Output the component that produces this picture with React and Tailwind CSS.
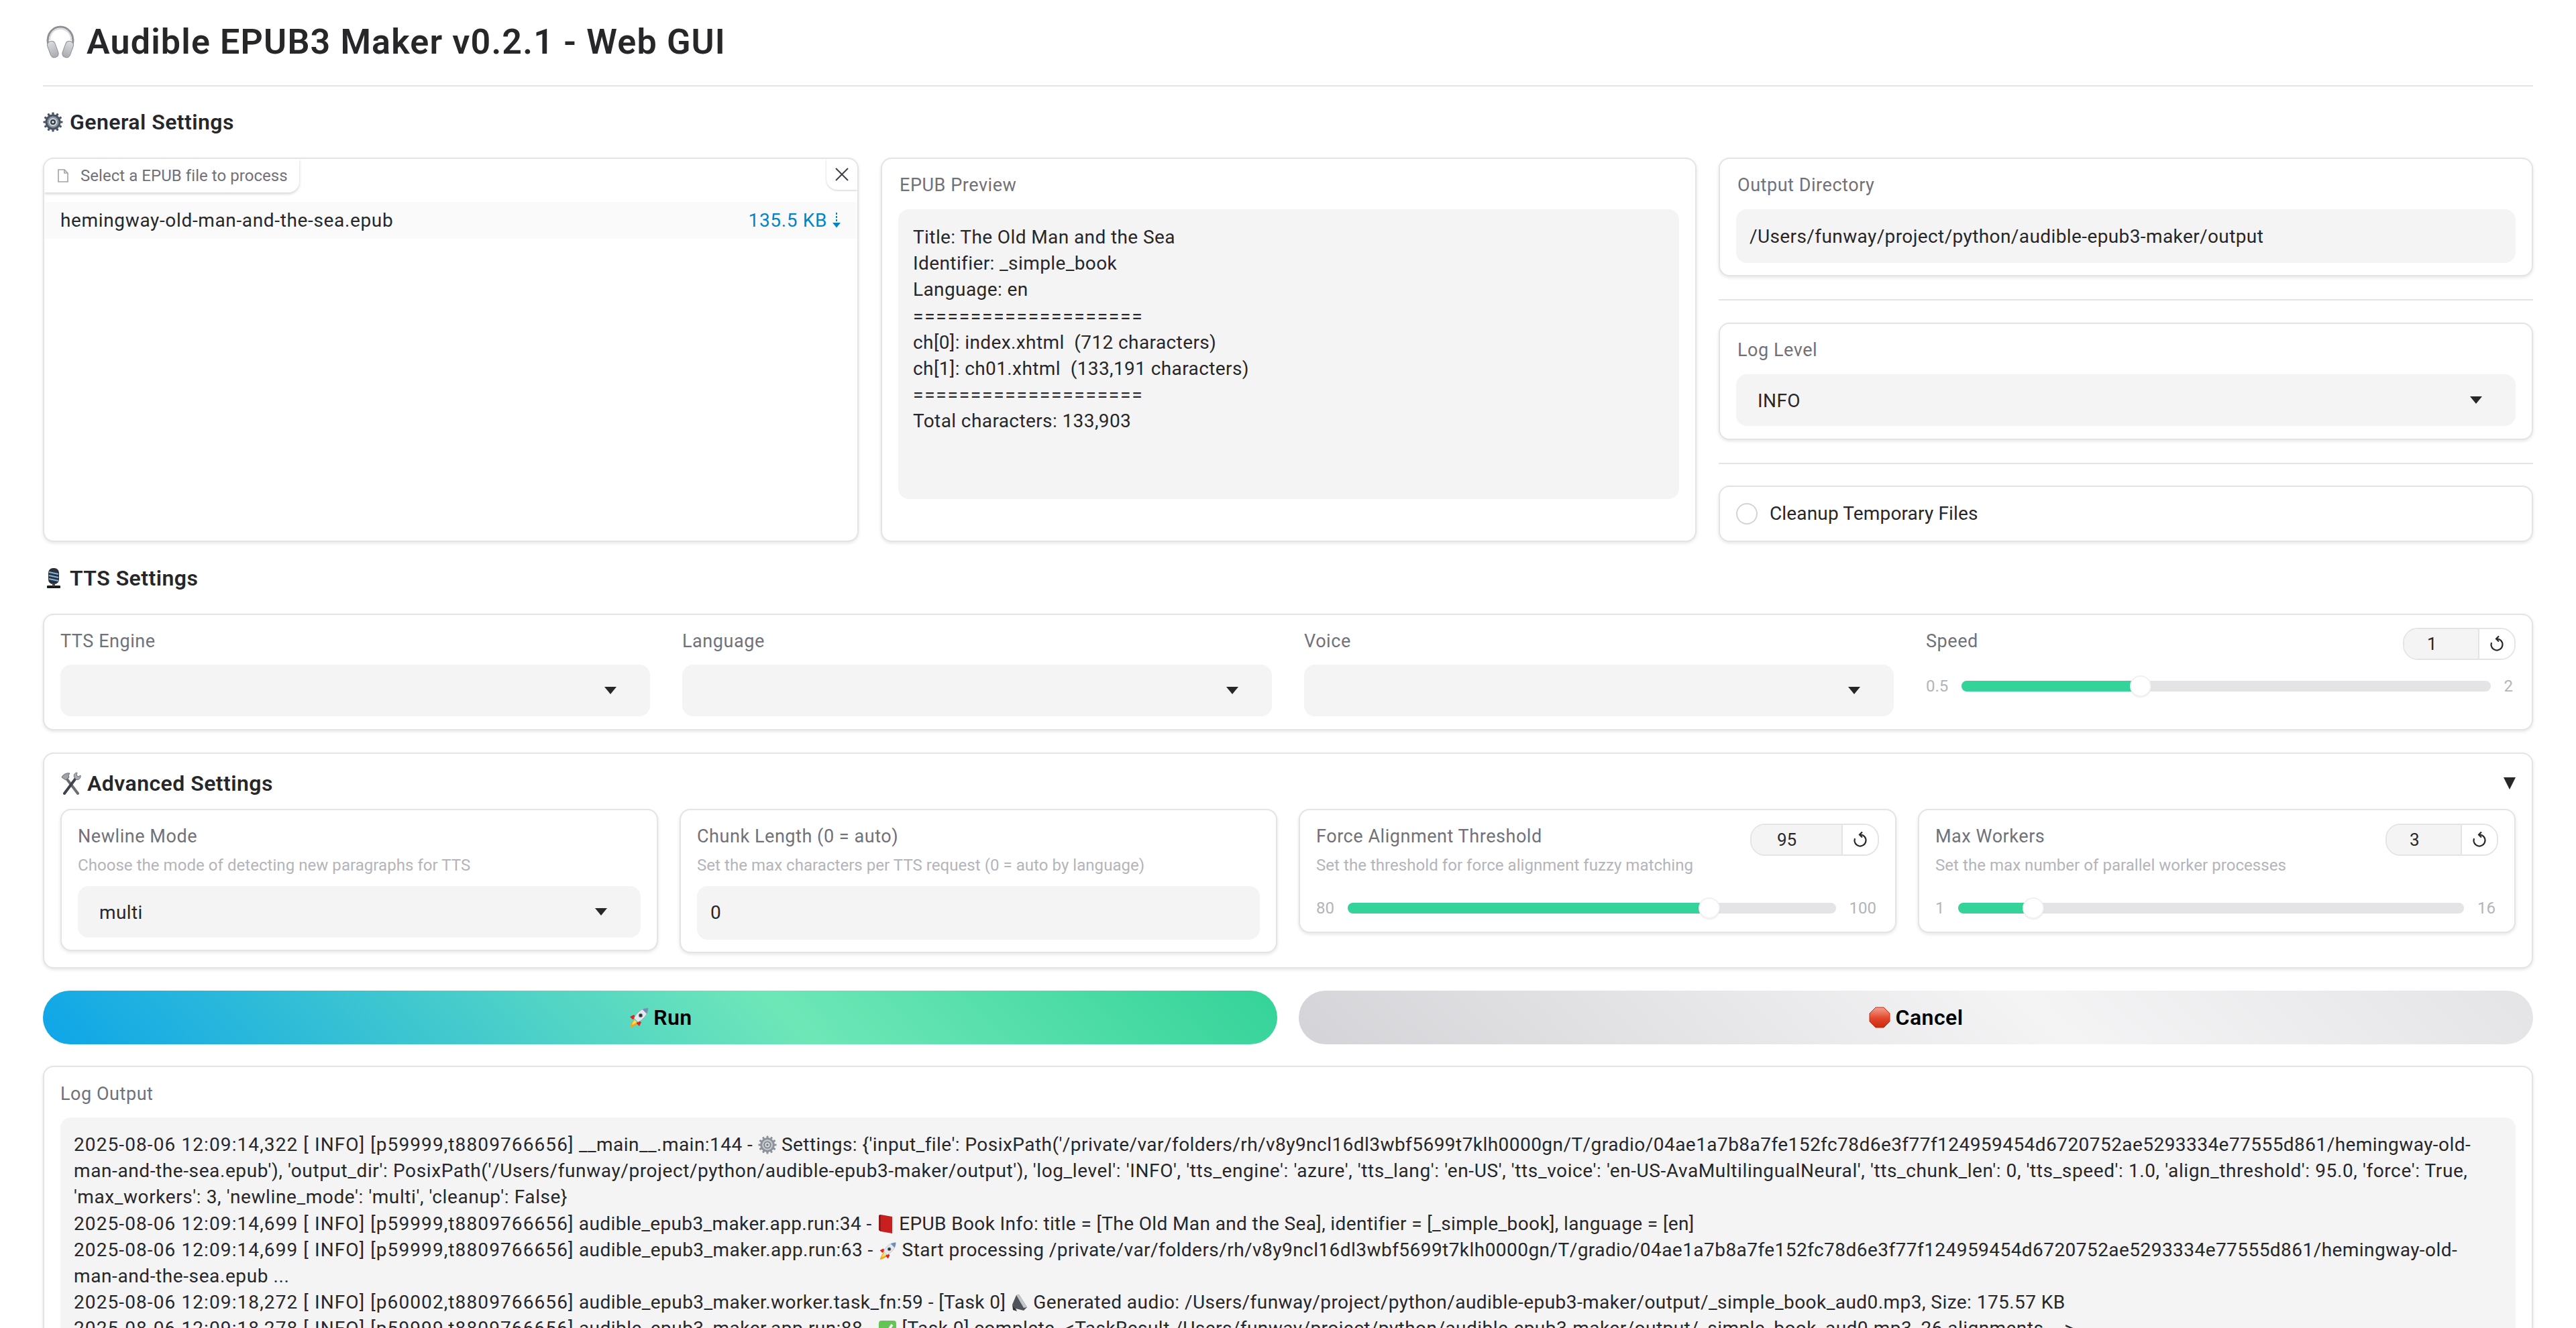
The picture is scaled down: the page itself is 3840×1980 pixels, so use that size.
import React from "react";

const Card = ({ className = "", children }) => (
  <div className={"rounded-2xl border-2 border-[#e4e4e7] bg-white shadow-[0_2px_5px_rgba(0,0,0,0.1)] " + className}>{children}</div>
);
const Label = ({ children, className = "" }) => (
  <div className={"text-[27px] leading-[39px] tracking-[0.55px] text-[#71717a] whitespace-nowrap " + className}>{children}</div>
);
const Info = ({ children }) => (
  <div className="mt-[6px] text-[24px] leading-[34px] tracking-[0.05px] text-[#b4b4bb] whitespace-nowrap">{children}</div>
);
const Tri = ({ className = "" }) => (
  <svg width="18" height="11" viewBox="0 0 18 11" className={className}><path d="M0 0H18L9 11Z" fill="#27272a" /></svg>
);
const Select = ({ value = "", className = "" }) => (
  <div className={"flex h-[77px] items-center justify-between rounded-2xl bg-[#f4f4f5] pl-[32px] pr-[50px] text-[28px] tracking-[0.4px] text-[#27272a] " + className}>
    <span className="pt-[2px]">{value}</span><Tri />
  </div>
);
const Reset = () => (
  <svg width="22" height="28" viewBox="0 0 22 28" fill="none" stroke="#27272a" strokeWidth="2.2">
    <path d="M11 6.5a8.500 8.500 0 1 1-8 5.600" />
    <path d="M14 2.500 10 6.500l4 4" />
  </svg>
);
const NumBox = ({ value, wide }) => (
  <div className={"flex h-[48px] overflow-hidden rounded-[22px] border-2 border-[#e4e4e7] text-[26px] text-[#27272a] " + (wide ? "w-[192px]" : "w-[168px]")}>
    <div className={"flex flex-1 items-center border-r-2 border-[#e4e4e7] bg-[#f4f4f5] " + (wide ? "pl-[38px]" : "pl-[34px]")}>{value}</div>
    <div className="flex w-[52px] items-center justify-center bg-white"><Reset /></div>
  </div>
);
const Slider = ({ min, max, pct }) => (
  <div className="flex h-[32px] items-center gap-[20px] pr-[4px] text-[24px] text-[#b4b4bb]">
    <span>{min}</span>
    <div className="relative h-[16px] flex-1 rounded-full bg-[#e4e4e7]">
      <div className="h-full rounded-l-full bg-[#34d399]" style={{ width: pct + "%" }} />
      <div className="absolute top-[-8px] h-[32px] w-[32px] rounded-full border-2 border-[#f1f1f3] bg-white shadow-[0_1px_2px_rgba(0,0,0,0.08)]" style={{ left: `calc(${pct}% - 2px)` }} />
    </div>
    <span>{max}</span>
  </div>
);

/* Emoji drawings */
const Headphones = () => (
  <svg width="44" height="50" viewBox="0 0 44 50" fill="none">
    <defs>
      <linearGradient id="cup" x1="0" y1="0" x2="0" y2="1"><stop offset="0" stopColor="#dcdde0" /><stop offset="1" stopColor="#a9abb0" /></linearGradient>
    </defs>
    <path d="M3.500 27C1 11 12 2 22 2s21 9 18.500 25" stroke="#8d8f94" strokeWidth="3" />
    <path d="M6 22C6 11 14 5 22 5s16 6 16 17" stroke="#d9dadd" strokeWidth="1.800" />
    <rect x="5" y="23" width="12" height="25" rx="5.500" fill="url(#cup)" stroke="#8d8f94" transform="rotate(-20 11 36)" />
    <rect x="27" y="23" width="12" height="25" rx="5.500" fill="url(#cup)" stroke="#8d8f94" transform="rotate(20 33 36)" />
  </svg>
);
const Gear = ({ light = false }) => (
  <svg width="100%" height="100%" viewBox="0 0 30 30">
    <g fill={light ? "#8d929a" : "#4a5462"}>
      <circle cx="15" cy="15" r="11.500" />
      {[0, 30, 60, 90, 120, 150].map((a) => (
        <rect key={a} x="13.400" y="0.500" width="3.200" height="29" rx="0.800" transform={`rotate(${a} 15 15)`} />
      ))}
    </g>
    <circle cx="15" cy="15" r="8.500" fill={light ? "#c4c8ce" : "#8e97a4"} />
    <circle cx="15" cy="15" r="6" fill={light ? "#7d828a" : "#d3d7dd"} />
    <circle cx="15" cy="15" r="4" fill={light ? "#d9dce0" : "#333b47"} />
    <circle cx="15" cy="15" r="1.800" fill={light ? "#70757d" : "#e7eaee"} />
  </svg>
);
const Mic = () => (
  <svg width="24" height="32" viewBox="0 0 24 32" className="ml-[4px]">
    <rect x="4" y="1" width="16" height="24" rx="7" fill="#2c3138" />
    <path d="M5 7l14 3M5 12l14 3M5 17l14 3" stroke="#7db7e8" strokeWidth="2.200" />
    <rect x="2" y="27" width="20" height="4" rx="1" fill="#1a1c20" />
    <rect x="10" y="24" width="4" height="4" fill="#4a4f56" />
  </svg>
);
const Tools = () => (
  <svg width="32" height="34" viewBox="0 0 32 34" fill="none">
    <path d="M26 32 7 7" stroke="#6a6d73" strokeWidth="4" strokeLinecap="round" />
    <path d="M2 8c2-5 8-7 12-6l-2 3 1 3-5 4z" fill="#9fa2a8" stroke="#6a6d73" />
    <path d="M6 32 24 8" stroke="#3f4248" strokeWidth="4" strokeLinecap="round" />
    <path d="M21 8c-2-3 0-7 4-7l-1 4 3 2 3-2c1 4-3 8-7 6z" fill="#a9acb2" stroke="#6a6d73" />
  </svg>
);
const Rocket = ({ size = 32 }) => (
  <svg width={size} height={size} viewBox="0 0 32 32">
    <path d="M9 19c-3 3-5 8-6 12 4-1 9-3 12-6z" fill="#f9a21a" />
    <path d="M10 20c-2 2-3 4-4 7 3-1 5-2 7-4z" fill="#ffe066" />
    <path d="M9 12l-6 3 4 4 5-2zM20 23l-3 6-4-4 2-5z" fill="#d9281e" />
    <path d="M30 2c-9 0-16 6-21 15l6 6c9-5 15-12 15-21z" fill="#e6e8ec" stroke="#9a9da3" strokeWidth=".6" />
    <path d="M30 2c-3 0-6 .7-8.500 2l6.500 6.500C29.300 8 30 5 30 2z" fill="#6f8fb8" />
    <circle cx="19" cy="13" r="2.800" fill="#28303c" stroke="#8a9099" />
  </svg>
);
const Stop = () => (
  <svg width="32" height="32" viewBox="0 0 32 32">
    <defs><linearGradient id="st" x1="0" y1="0" x2="0" y2="1"><stop offset="0" stopColor="#f3a08f" /><stop offset=".55" stopColor="#e2452a" /><stop offset="1" stopColor="#cc2a0c" /></linearGradient></defs>
    <path d="M10 1h12l9 9v12l-9 9H10l-9-9V10z" fill="url(#st)" stroke="#cc2a0c" />
  </svg>
);
const Book = () => (
  <svg width="26" height="30" viewBox="0 0 26 30" className="inline-block align-[-6px]">
    <path d="M3 2 6 1l17 3v25L6 26 3 24z" fill="#c9201f" />
    <path d="M3 2l3-1v25l-3-2z" fill="#8f1a1a" />
    <path d="M23 4l2 1v23l-2 1z" fill="#e5e1dc" />
  </svg>
);
const RocketInline = () => <span className="inline-block align-[-6px]"><Rocket size={28} /></span>;
const GearInline = () => <span className="inline-block h-[28px] w-[28px] align-[-5px]"><Gear light /></span>;
const Speaker = () => (
  <svg width="26" height="28" viewBox="0 0 26 28" className="inline-block align-[-6px]">
    <path d="M8 2l4-1 12 19-5 5-12-3-5-6z" fill="#50535a" />
    <path d="M8 2l4-1 12 19-5 1z" fill="#c3c6cb" />
    <path d="M2 16l5 6 2 4-6-2z" fill="#2d2f33" />
  </svg>
);
const Check = () => (
  <svg width="28" height="28" viewBox="0 0 28 28" className="inline-block align-[-6px]">
    <rect x="1" y="1" width="26" height="26" rx="4" fill="#62c554" />
    <path d="M7 14l5 6 9-13" fill="none" stroke="#fff" strokeWidth="3.500" />
  </svg>
);

const Heading = ({ icon, children, className = "" }) => (
  <div className={"flex h-[40px] items-center text-[32px] font-semibold tracking-[0.45px] text-[#27272a] whitespace-nowrap " + className}>
    {icon}<span>{children}</span>
  </div>
);

const Stamp = ({ children }) => <span className="tracking-[1.1px]">{children}</span>;

export default function App() {
  return (
    <div className="h-[1980px] w-[3840px] overflow-hidden bg-white px-[64px] font-['Roboto',sans-serif]">
      {/* Title */}
      <div className="flex h-[129px] items-center gap-[17px] border-b-2 border-[#e4e4e7] pb-[2px] pl-[4px] text-[52px] font-semibold tracking-[1.15px] text-[#27272a]">
        <Headphones /><h1>Audible EPUB3 Maker v0.2.1 - Web GUI</h1>
      </div>

      <Heading className="my-[33px] gap-[10px]" icon={<span className="h-[30px] w-[30px]"><Gear /></span>}>General Settings</Heading>

      {/* General row */}
      <div className="grid h-[573px] grid-cols-[1216px_1216px_1fr] gap-[33px]">
        <Card className="relative overflow-hidden">
          <div className="flex h-[50px] w-[380px] items-center gap-[18px] rounded-br-2xl bg-white pl-[20px] text-[24px] tracking-[0.05px] text-[#71717a] shadow-[0_2px_4px_rgba(0,0,0,0.18)]">
            <svg width="16" height="20" viewBox="0 0 16 20" fill="none" stroke="#a1a1aa" strokeWidth="1.600"><path d="M1 1h9l5 5v13H1z" /><path d="M10 1v5h5" /></svg>
            <span className="whitespace-nowrap">Select a EPUB file to process</span>
          </div>
          <div className="absolute right-0 top-0 flex h-[46px] w-[46px] items-center justify-center rounded-bl-2xl bg-white shadow-[0_1px_3px_rgba(0,0,0,0.2)]">
            <svg width="24" height="24" viewBox="0 0 24 24" stroke="#3f3f46" strokeWidth="2"><path d="M3 3l18 18M21 3 3 21" /></svg>
          </div>
          <div className="mx-[1px] mt-[14px] flex h-[55px] items-center justify-between bg-[#fafafa] pl-[23px] pr-[24px] text-[28px] tracking-[0.65px] text-[#27272a]">
            <span>hemingway-old-man-and-the-sea.epub</span>
            <span className="flex items-center gap-[8px] text-[#0284c7]">135.5 KB
              <svg width="12" height="28" viewBox="0 0 12 28" fill="none" stroke="#0284c7" strokeWidth="2"><path d="M6 2v16" strokeDasharray="3 2" /><path d="M2 18l4 5 4-5z" fill="#0284c7" /></svg>
            </span>
          </div>
        </Card>

        <Card className="px-[24px] pt-[20px]">
          <Label className="mb-[16px] pl-[2px]">EPUB Preview</Label>
          <div className="h-[432px] rounded-2xl bg-[#f4f4f5] px-[22px] pt-[22px] text-[28px] leading-[39.2px] tracking-[0.4px] text-[#27272a] whitespace-pre">
            {"Title: The Old Man and the Sea\nIdentifier: _simple_book\nLanguage: en\n"}
            <span className="tracking-[1.800px]">====================</span>
            {"\nch[0]: index.xhtml  (712 characters)\nch[1]: ch01.xhtml  (133,191 characters)\n"}
            <span className="tracking-[1.800px]">====================</span>
            {"\nTotal characters: 133,903"}
          </div>
        </Card>

        <div className="flex h-full flex-col">
          <Card className="h-[177px] shrink-0 px-[24px] pt-[20px]">
            <Label className="mb-[16px] pl-[2px]">Output Directory</Label>
            <div className="flex h-[80px] items-center rounded-2xl bg-[#f4f4f5] px-[20px] pt-[2px] text-[28px] tracking-[0.4px] text-[#27272a]">/Users/funway/project/python/audible-epub3-maker/output</div>
          </Card>
          <div className="mb-[33px] mt-[34px] h-[2px] shrink-0 bg-[#e4e4e7]" />
          <Card className="h-[175px] shrink-0 px-[24px] pt-[20px]">
            <Label className="mb-[16px] pl-[2px]">Log Level</Label>
            <Select value="INFO" />
          </Card>
          <div className="mb-[32px] mt-[34px] h-[2px] shrink-0 bg-[#e4e4e7]" />
          <Card className="flex h-[84px] shrink-0 items-center gap-[18px] px-[24px] text-[28px] tracking-[0.15px] text-[#27272a]">
            <div className="h-[32px] w-[32px] rounded-full border-2 border-[#d4d4d8] bg-white" />
            <span>Cleanup Temporary Files</span>
          </Card>
        </div>
      </div>

      <Heading className="mb-[33px] mt-[34px] gap-[12px]" icon={<Mic />}>TTS Settings</Heading>

      {/* TTS */}
      <Card className="grid h-[174px] grid-cols-4 gap-[48px] px-[24px] pt-[20px]">
        <div><Label className="mb-[15px]">TTS Engine</Label><Select /></div>
        <div><Label className="mb-[15px]">Language</Label><Select /></div>
        <div><Label className="mb-[15px]">Voice</Label><Select /></div>
        <div>
          <div className="flex h-[48px] items-start justify-between"><Label>Speed</Label><div className="-mt-[1px]"><NumBox value="1" /></div></div>
          <div className="mt-[22px]"><Slider min="0.5" max="2" pct={32} /></div>
        </div>
      </Card>

      {/* Advanced */}
      <Card className="mt-[33px] h-[322px] px-[24px] pt-[24px]">
        <div className="mb-[18px] flex h-[40px] items-center justify-between">
          <Heading icon={<Tools />} className="gap-[8px]">Advanced Settings</Heading>
          <svg width="18" height="18" viewBox="0 0 18 18"><path d="M0 0H18L9 18Z" fill="#27272a" /></svg>
        </div>
        <div className="grid grid-cols-4 items-start gap-[32px]">
          <Card className="h-[212px] px-[24px] pt-[20px]">
            <Label>Newline Mode</Label>
            <Info>Choose the mode of detecting new paragraphs for TTS</Info>
            <Select value="multi" className="mt-[14px]" />
          </Card>
          <Card className="h-[215px] px-[24px] pt-[20px]">
            <Label>Chunk Length (0 = auto)</Label>
            <Info>Set the max characters per TTS request (0 = auto by language)</Info>
            <div className="mt-[14px] flex h-[80px] items-center rounded-2xl bg-[#f4f4f5] px-[20px] text-[28px] text-[#27272a]">0</div>
          </Card>
          <Card className="h-[185px] px-[24px] pt-[20px]">
            <div className="flex h-[39px] items-start justify-between"><Label>Force Alignment Threshold</Label><NumBox value="95" wide /></div>
            <Info>Set the threshold for force alignment fuzzy matching</Info>
            <div className="mt-[31px]"><Slider min="80" max="100" pct={72.2} /></div>
          </Card>
          <Card className="h-[185px] px-[24px] pt-[20px]">
            <div className="flex h-[39px] items-start justify-between"><Label>Max Workers</Label><NumBox value="3" /></div>
            <Info>Set the max number of parallel worker processes</Info>
            <div className="mt-[31px]"><Slider min="1" max="16" pct={13} /></div>
          </Card>
        </div>
      </Card>

      {/* Buttons */}
      <div className="mt-[33px] grid h-[80px] grid-cols-2 gap-[32px] text-[32px] font-semibold tracking-[0.45px] text-black">
        <button className="flex items-center justify-center gap-[6px] rounded-full bg-[linear-gradient(45deg,#0ea5e9,#6ee7b7_60%,#34d399)]"><Rocket />Run</button>
        <button className="flex items-center justify-center gap-[8px] rounded-full bg-[linear-gradient(45deg,#d4d4d8,#f4f4f5_60%,#e4e4e7)]"><Stop />Cancel</button>
      </div>

      {/* Log */}
      <Card className="mt-[32px] h-[500px] px-[24px] pt-[21px]">
        <Label className="mb-[15px]">Log Output</Label>
        <div className="h-[460px] rounded-2xl bg-[#f4f4f5] px-[20px] pt-[21px] text-[28px] leading-[39.2px] tracking-[0.45px] text-[#27272a] whitespace-nowrap">
          <div><Stamp>2025-08-06 12:09:14,322 [ INFO] [p59999,t8809766656]</Stamp> __main__.main:144 - <GearInline /> Settings: {"{"}'input_file': PosixPath('/private/var/folders/rh/v8y9ncl16dl3wbf5699t7klh0000gn/T/gradio/04ae1a7b8a7fe152fc78d6e3f77f124959454d6720752ae5293334e77555d861/hemingway-old-</div>
          <div className="tracking-[0.6px]">man-and-the-sea.epub'), 'output_dir': PosixPath('/Users/funway/project/python/audible-epub3-maker/output'), 'log_level': 'INFO', 'tts_engine': 'azure', 'tts_lang': 'en-US', 'tts_voice': 'en-US-AvaMultilingualNeural', 'tts_chunk_len': 0, 'tts_speed': 1.0, 'align_threshold': 95.0, 'force': True,</div>
          <div className="tracking-[0.6px]">'max_workers': 3, 'newline_mode': 'multi', 'cleanup': False{"}"}</div>
          <div className="tracking-[0.38px]"><Stamp>2025-08-06 12:09:14,699 [ INFO] [p59999,t8809766656]</Stamp> audible_epub3_maker.app.run:34 - <Book /> EPUB Book Info: title = [The Old Man and the Sea], identifier = [_simple_book], language = [en]</div>
          <div><Stamp>2025-08-06 12:09:14,699 [ INFO] [p59999,t8809766656]</Stamp> audible_epub3_maker.app.run:63 - <RocketInline /> Start processing /private/var/folders/rh/v8y9ncl16dl3wbf5699t7klh0000gn/T/gradio/04ae1a7b8a7fe152fc78d6e3f77f124959454d6720752ae5293334e77555d861/hemingway-old-</div>
          <div className="tracking-[0.6px]">man-and-the-sea.epub ...</div>
          <div><Stamp>2025-08-06 12:09:18,272 [ INFO] [p60002,t8809766656]</Stamp> audible_epub3_maker.worker.task_fn:59 - [Task 0] <Speaker /> Generated audio: /Users/funway/project/python/audible-epub3-maker/output/_simple_book_aud0.mp3, Size: 175.57 KB</div>
          <div><Stamp>2025-08-06 12:09:18,278 [ INFO] [p59999,t8809766656]</Stamp> audible_epub3_maker.app.run:88 - <Check /> [Task 0] complete. &lt;TaskResult /Users/funway/project/python/audible-epub3-maker/output/_simple_book_aud0.mp3, 26 alignments ...&gt;</div>
        </div>
      </Card>
    </div>
  );
}
